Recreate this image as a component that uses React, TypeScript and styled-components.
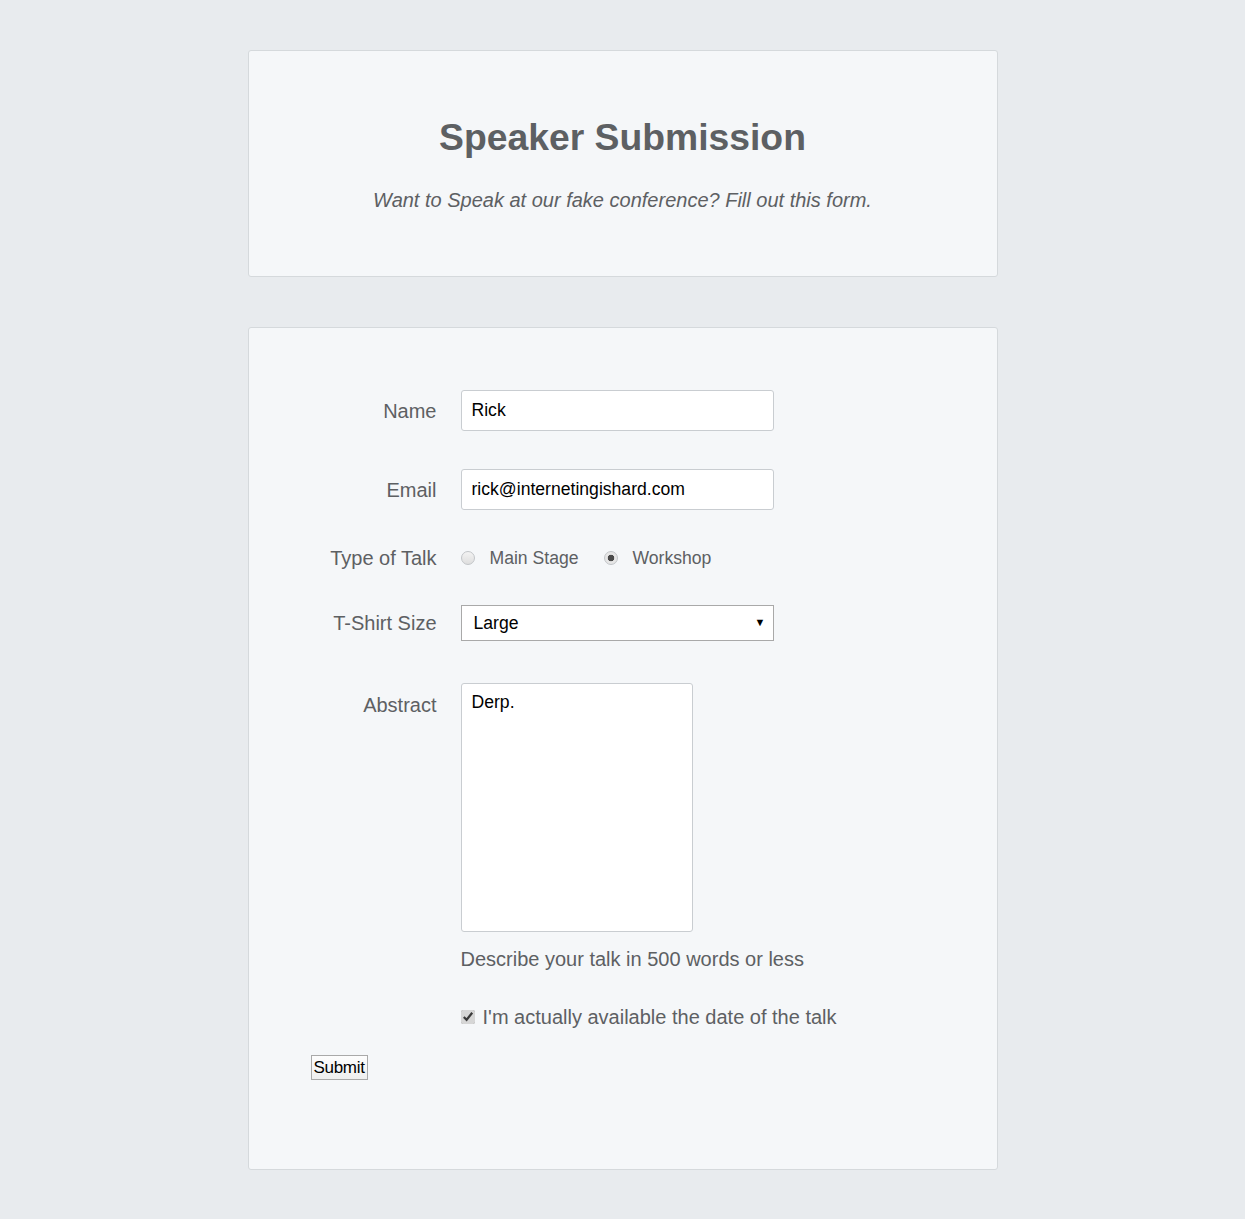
import React, { useState } from 'react';
import styled, { createGlobalStyle } from 'styled-components';

const colors = {
  page: '#e8ebee',
  card: '#f5f7f9',
  border: '#d5d9dc',
  text: '#5d6063',
  field: '#c9cdd1',
};

const GlobalStyle = createGlobalStyle`
  html, body {
    margin: 0;
    padding: 0;
    background: ${colors.page};
  }
  body {
    font-family: "Liberation Sans", Arial, sans-serif;
    color: ${colors.text};
  }
`;

const Page = styled('div')`
  display: flex;
  flex-direction: column;
  align-items: center;
  gap: 50px;
  padding: 50px 0;
`;

const Card = styled('section')`
  box-sizing: border-box;
  width: 750px;
  background: ${colors.card};
  border: 1px solid ${colors.border};
  border-radius: 3px;
`;

const Header = styled(Card)`
  padding: 65px 0 64px;
  text-align: center;
`;

const Title = styled('h1')`
  margin: 0;
  font-size: 37.3px;
  line-height: 43px;
  font-weight: bold;
  color: ${colors.text};
`;

const Subtitle = styled('p')`
  margin: 29px 0 0;
  font-size: 20px;
  line-height: 24px;
  font-style: italic;
`;

const FormCard = styled(Card)`
  padding: 62px 62px 89px;
`;

const Row = styled('div')<{ $top?: number; $align?: string }>`
  display: flex;
  align-items: ${(p) => p.$align || 'center'};
  gap: 24px;
  margin-top: ${(p) => p.$top ?? 0}px;
`;

const Label = styled('label')<{ $pad?: number }>`
  width: 126px;
  flex-shrink: 0;
  text-align: right;
  font-size: 20px;
  line-height: 24px;
  padding-top: ${(p) => p.$pad ?? 0}px;
`;

const TextInput = styled('input')`
  box-sizing: border-box;
  width: 313px;
  height: 41px;
  padding: 0 10px 1px;
  border: 1px solid ${colors.field};
  border-radius: 3px;
  background: #fff;
  font-family: inherit;
  font-size: 17.6px;
  color: #000;
  outline: none;
`;

const Choices = styled('div')`
  display: flex;
  align-items: center;
  height: 24px;
`;

const Choice = styled('label')`
  display: flex;
  align-items: center;
  gap: 15px;
  margin-right: 25px;
  font-size: 17.6px;
`;

const Radio = styled('input')`
  appearance: none;
  box-sizing: border-box;
  width: 14px;
  height: 14px;
  margin: 0;
  border: 1px solid #c2c5c8;
  border-radius: 50%;
  background: linear-gradient(#f3f3f3, #dedede);

  &:checked {
    background: radial-gradient(circle, #4a4a4a 0, #4a4a4a 3px, #e6e6e6 3.6px);
  }
`;

const SelectWrap = styled('div')`
  position: relative;
  width: 313px;
`;

const Select = styled('select')`
  appearance: none;
  box-sizing: border-box;
  width: 100%;
  height: 36px;
  padding: 0 12px;
  border: 1px solid #a9a9a9;
  border-radius: 0;
  background: #fff;
  font-family: inherit;
  font-size: 17.6px;
  color: #000;
  outline: none;
`;

const Arrow = styled('span')`
  position: absolute;
  right: 8px;
  top: 11px;
  font-size: 11px;
  color: #000;
  pointer-events: none;
`;

const TextArea = styled('textarea')`
  box-sizing: border-box;
  width: 232px;
  height: 249px;
  padding: 8px 10px;
  border: 1px solid ${colors.field};
  border-radius: 3px;
  background: #fff;
  font-family: inherit;
  font-size: 17.6px;
  color: #000;
  resize: none;
  outline: none;
`;

const Help = styled('p')`
  margin: 15px 0 0 150px;
  font-size: 20px;
  line-height: 24px;
`;

const CheckRow = styled('label')`
  display: flex;
  align-items: center;
  gap: 8px;
  margin: 34px 0 0 150px;
  font-size: 20px;
  line-height: 24px;
`;

const Checkbox = styled('input')`
  width: 14px;
  height: 14px;
  margin: 0;
  accent-color: #d6d6d6;
`;

const SubmitButton = styled('button')`
  display: block;
  margin-top: 26px;
  height: 25px;
  padding: 0 2px;
  border: 1px solid #a9a9a9;
  background: linear-gradient(#fdfdfd, #efefef);
  font-family: inherit;
  font-size: 17px;
  letter-spacing: -0.3px;
  color: #000;
`;

export default function App() {
  const [talk, setTalk] = useState('workshop');
  const [available, setAvailable] = useState(true);

  return (
    <>
      <GlobalStyle />
      <Page>
        <Header>
          <Title>Speaker Submission</Title>
          <Subtitle>Want to Speak at our fake conference? Fill out this form.</Subtitle>
        </Header>

        <FormCard>
          <form onSubmit={(e) => e.preventDefault()}>
            <Row>
              <Label htmlFor="name">Name</Label>
              <TextInput id="name" defaultValue="Rick" />
            </Row>
            <Row $top={38}>
              <Label htmlFor="email">Email</Label>
              <TextInput id="email" type="email" defaultValue="rick@internetingishard.com" />
            </Row>
            <Row $top={36}>
              <Label>Type of Talk</Label>
              <Choices>
                <Choice>
                  <Radio
                    type="radio"
                    name="talk"
                    checked={talk === 'main'}
                    onChange={() => setTalk('main')}
                  />
                  Main Stage
                </Choice>
                <Choice>
                  <Radio
                    type="radio"
                    name="talk"
                    checked={talk === 'workshop'}
                    onChange={() => setTalk('workshop')}
                  />
                  Workshop
                </Choice>
              </Choices>
            </Row>
            <Row $top={35}>
              <Label htmlFor="size">T-Shirt Size</Label>
              <SelectWrap>
                <Select id="size" defaultValue="large">
                  <option value="small">Small</option>
                  <option value="medium">Medium</option>
                  <option value="large">Large</option>
                </Select>
                <Arrow>▼</Arrow>
              </SelectWrap>
            </Row>
            <Row $top={42} $align="flex-start">
              <Label htmlFor="abstract" $pad={10}>Abstract</Label>
              <TextArea id="abstract" defaultValue="Derp." />
            </Row>
            <Help>Describe your talk in 500 words or less</Help>
            <CheckRow>
              <Checkbox
                type="checkbox"
                checked={available}
                onChange={() => setAvailable(!available)}
              />
              I'm actually available the date of the talk
            </CheckRow>
            <SubmitButton type="submit">Submit</SubmitButton>
          </form>
        </FormCard>
      </Page>
    </>
  );
}
